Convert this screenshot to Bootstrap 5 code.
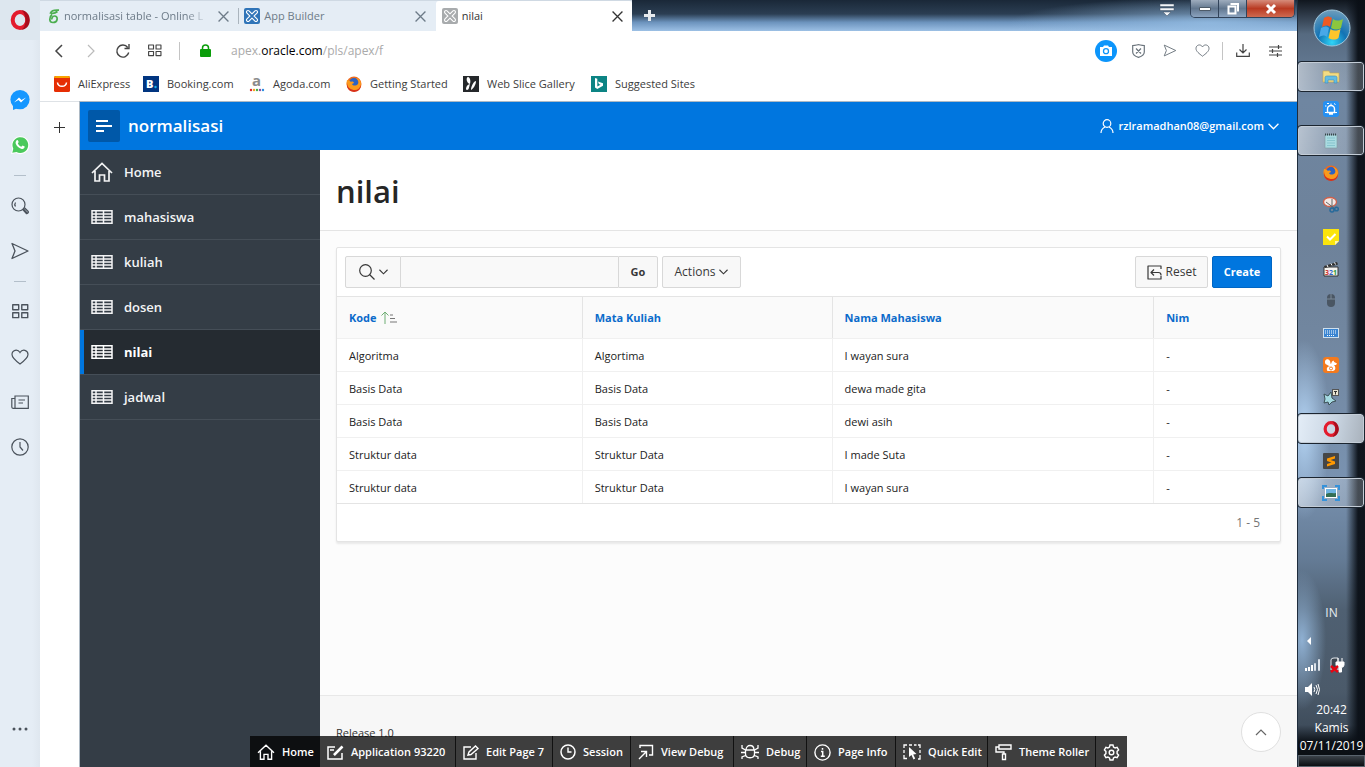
<!DOCTYPE html>
<html lang="id">
<head>
<meta charset="utf-8">
<meta name="viewport" content="width=device-width, initial-scale=1">
<title>nilai</title>
<link href="https://cdn.jsdelivr.net/npm/bootstrap@5.3.0/dist/css/bootstrap.min.css" rel="stylesheet">
<style>
:root{--ui:"Open Sans","Noto Sans",sans-serif;--blue:#0076df;--navy:#343d46}
body{font-family:var(--ui);font-size:12px;line-height:16px;color:#333;background:#fff;overflow:hidden}
button,input{font:inherit;color:inherit}
button{background:none;border:0;padding:0}
a{color:inherit;text-decoration:none}
svg{display:block;flex:none;overflow:visible}
.ico{fill:none;stroke:currentColor;stroke-width:1.2}
.shrinkable{min-width:0;min-height:0}
.rail{width:40px;background:linear-gradient(90deg,#e5edf5 80%,#dfe7ef);color:#4b535c}
.rail-logo{height:40px;width:40px;background:#dde7ef;display:grid;place-items:center;margin-bottom:37px}
.rail-btn{height:45px;width:40px;display:grid;place-items:center}
.rail-sep{width:12px;height:1px;background:#b3bfca;margin:8px 0 7px}
.tabstrip{height:31px;background:radial-gradient(ellipse 200px 26px at 93% 75%,rgba(150,190,228,.8),transparent),linear-gradient(#1a2838,#2b3e53 45%,#6c93bd 72%,#9cc0e5)}
.tabgroup{width:592px;background:#e5edf5;border-top:1px solid #cfd9e3}
.tab-item{flex:1 1 0;color:#6d7b88;padding:0 9px 0 8px;font-size:11px}
.tab-item + .tab-item{padding-left:6px}
.tab-split + .tab-item{padding-left:5px}
.tab-live{background:#fff;color:#333;border-radius:3px 3px 0 0;margin-left:1px}
.tab-split{width:1px;height:16px;background:#aab4bd}
.tab-fade{white-space:nowrap;-webkit-mask:linear-gradient(90deg,#000 88%,rgba(0,0,0,.25));mask:linear-gradient(90deg,#000 88%,rgba(0,0,0,.25))}
.win-ctl{border:1px solid #31435a;border-top:0;border-radius:0 0 5px 5px;overflow:hidden;height:18px;margin-right:2px}
.win-ctl button{width:28px;display:grid;place-items:center;background:linear-gradient(#9eacbd,#62778f 50%,#8ba3bf);border-right:1px solid #31435a}
.win-ctl .win-x{width:47px;border:0;background:linear-gradient(#d68c7b,#b93a22 50%,#cf6a50)}
.addr{height:39px;color:#444;padding:0 6px 0 3px}
.addr-btn{width:32px;height:32px;display:grid;place-items:center}
.addr-sep{width:1px;height:18px;background:#c4c4c4}
.addr-forward{color:#bbb}
.addr-text{font-size:12px;color:#aaa}
.marks{height:31px;display:grid;grid-template-columns:89px 106px 97px 117px 128px auto;padding:0 0 4px 14px;color:#3c3c3c;font-size:11px}
.page-add{width:39px;color:#444}
.page-add button{height:50px;display:grid;place-items:center}
.app{border:1px solid #adb9c4;border-width:1px 0 0 1px}
.app-head{height:48px;background:var(--blue);color:#fff;padding:0 18px 0 8px}
.app-menu{width:32px;height:32px;background:#0058a8;border-radius:2px;display:grid;place-items:center}
.app-title{font-size:17px;font-weight:600;line-height:24px}
.user{font-size:11px;font-weight:600}
.side{width:240px;background:var(--navy);color:#fff}
.side a{height:45px;border-bottom:1px solid #454e57;padding-left:11px;font-size:13px;font-weight:600;color:#f3f4f5;gap:11px}
.side a.active{background:#252b31;box-shadow:inset 4px 0 var(--blue);font-weight:700;color:#fff}
.content{background:#fcfcfc}
.page-title{height:81px;background:#fff;border-bottom:1px solid #e4e4e4;padding:2px 16px 0}
.page-title h1{font-size:31px;line-height:40px;font-weight:600;color:#262626}
.report{background:#fff;border:1px solid #e4e4e4;border-radius:2px;box-shadow:0 2px 2px rgba(0,0,0,.08)}
.ctl{height:32px;border:1px solid #d8d8d8;background:#f8f8f8;border-radius:2px;color:#383838}
.ctl-search{width:56px;border-radius:2px 0 0 2px}
.ctl-input{width:217px;border-width:1px 0;border-radius:0;background:#f9f9f9}
.ctl-go{width:40px;font-weight:700;border-radius:0 2px 2px 0;font-size:11px}
.ctl-actions{width:79px}
.ctl-reset{width:73px}
.ctl-create{width:60px;background:var(--blue);border-color:#0066c4;color:#fff;font-weight:700;font-size:11px}
.grid-table{table-layout:fixed;font-size:11px;border-top:1px solid #e4e4e4}
.grid-table th{height:42px;background:#fafafa;border-right:1px solid #e4e4e4;border-bottom:1px solid #f0f0f0;padding:0 12px;color:#0b6bcb;font-weight:700}
.grid-table td{height:33px;border-right:1px solid #f0f0f0;border-bottom:1px solid #f0f0f0;padding:1px 12px 0;color:#222}
.grid-table tr>:last-child{border-right:0}
.grid-table tr:last-child td{border-bottom-color:#e4e4e4}
.w-a{width:26%}.w-b{width:26.5%}.w-c{width:34.1%}
.pager{height:37px;color:#767676;padding-right:20px}
.app-foot{height:72px;background:#f7f7f7;border-top:1px solid #e8e8e8;padding:29px 16px 0;font-size:11px}
.to-top{width:40px;height:40px;right:16px;bottom:15px;border:1px solid #e0e0e0;border-radius:50%;background:#fff;color:#666;display:grid;place-items:center}
.devbar{left:210px;bottom:0;height:31px;display:grid;grid-template-columns:70px 136px 97px 78px 103px 73px 89px 92px 108px 31px;background:rgba(0,0,0,.75);color:#fff;font-size:11px;font-weight:600}
.devbar a{display:flex;align-items:center;gap:7px;padding:1px 0 0 7px;border-right:1px solid #111;white-space:nowrap}
.devbar a:first-child,.devbar a:last-child{border-right:0}
.taskbar{width:68px;border-left:1px solid #1e2c3c;color:#fff;background:
 linear-gradient(90deg,transparent 48px,rgba(10,15,22,.95) 60px),
 radial-gradient(ellipse 26px 90px at 6px 430px,#b3d3f3,transparent),
 radial-gradient(ellipse 24px 70px at 4px 640px,#8fb0d2,transparent),
 linear-gradient(#10161e,#566a80 34px,#6f86a1 100px,#6e829a 240px,#71869f 330px,#7992b0 480px,#647b95 560px,#4f6072 610px,#4b5a6a 690px,#3f4d5c 725px,#0c1117 742px,#0a0d11)}
.orb{height:61px;padding-top:9px}
.task{height:32px;display:grid;place-items:center;width:66px}
.task-open{height:29px;margin:1px 0 2px;border:1px solid #c3ccd6;border-radius:3px;outline:1px solid #1b2530;background:linear-gradient(100deg,rgba(255,255,255,.5),rgba(255,255,255,.25) 50%,rgba(190,200,210,.3))}
.task-lit{background:linear-gradient(100deg,#e3edf7,#c9d5e2 55%,#a9b2bc)}
.tray-lang{color:#e8edf2}
.clock{line-height:18px;font-size:12px}
.tray-row{height:24px;padding-left:7px;gap:9px}
.peek{height:12px;border:1px solid #59636d;background:linear-gradient(#3b4249,#0b0e12)}
</style>
</head>
<body class="d-flex vh-100">
<svg width="0" height="0" class="position-absolute" aria-hidden="true">
 <symbol id="i-table" viewBox="0 0 22 14"><path d="M1 .8h20v12.400H1zM1 4h20M1 7h20M1 10h20M5 1v12M12.500 1v12" fill="none" stroke="currentColor" stroke-width="1.500"/></symbol>
 <symbol id="i-home" viewBox="0 0 22 20"><path d="M1 11 11 1.500 21 11M4 9v10h4.500v-6h5v6H18V9" fill="none" stroke="currentColor" stroke-width="1.700"/></symbol>
 <symbol id="i-down" viewBox="0 0 10 6"><path d="m.5.5 4.500 4.500L9.500.5" fill="none" stroke="currentColor" stroke-width="1.200"/></symbol>
 <symbol id="i-x" viewBox="0 0 10 10"><path d="m.5.5 9 9m0-9-9 9" fill="none" stroke="currentColor" stroke-width="1.200"/></symbol>
 <symbol id="i-heart" viewBox="0 0 18 16"><path d="M9 15C5 12 1 9 1 5.500 1 1 6.500-.5 9 3.500 11.500-.5 17 1 17 5.500 17 9 13 12 9 15z" fill="none" stroke="currentColor" stroke-width="1.200"/></symbol>
 <symbol id="i-send" viewBox="0 0 18 18"><path d="M1 1.500 17 9 1 16.500 4 9z" fill="none" stroke="currentColor" stroke-width="1.300" stroke-linejoin="round"/></symbol>
 <symbol id="i-four" viewBox="0 0 16 14"><path d="M.7.7h5.600v4.600H.7zM9.200.7h5.600v4.600H9.200zM.7 8.200h5.600v4.600H.7zM9.200 8.200h5.600v4.600H9.200z" fill="none" stroke="currentColor" stroke-width="1.300" stroke-linejoin="round"/></symbol>
 <symbol id="i-apex" viewBox="0 0 16 16"><rect width="16" height="16" rx="2"/><path d="m4 4 8 8m0-8-8 8" stroke="#fff" stroke-width="4" stroke-linecap="round"/><path d="m4 4 8 8m0-8-8 8" stroke="currentColor" stroke-width="1.800" stroke-linecap="round"/></symbol>
 <symbol id="i-opera" viewBox="0 0 20 20"><ellipse cx="10" cy="10" rx="7.300" ry="8" fill="none" stroke="#e31b2d" stroke-width="4"/><path d="M11 .2C16 0 19.800 4.500 19.800 10S16 20 11 19.800C15 18 15.500 13 15.500 10S14.500 2 11 .2z" fill="#a90c1c"/></symbol>
 <symbol id="i-fox" viewBox="0 0 16 16"><circle cx="8" cy="8" r="7.500" fill="#ef6a1c"/><circle cx="8" cy="7" r="5" fill="#2c63c4"/><path d="M1 4c2 0 3 1 4 2 1-1 3 0 3 1l-2 1c1 2 4 2 6 0 1-2 0-4-2-6 5 1 6 6 4 9-3 5-10 5-12 1-1-2-2-5-1-8z" fill="#fb9a1c"/><path d="M1 6c0 6 4 8 8 8 3 0 5-2 6-5 0 9-13 9-14 1z" fill="#d8321a"/></symbol>
</svg>

<nav class="rail flex-shrink-0 d-flex flex-column align-items-center" aria-label="Opera">
 <button class="rail-logo" aria-label="Menu"><svg width="20" height="20"><use href="#i-opera"/></svg></button>
 <button class="rail-btn" aria-label="Messenger"><svg width="20" height="20" viewBox="0 0 20 20"><circle cx="10" cy="9.600" r="9.600" fill="#1597ff"/><path d="M3 14v6l5-2z" fill="#1597ff"/><path d="m4 12.500 5-5 2.500 2.500L16 7.500l-5 5L8.500 10z" fill="#fff"/></svg></button>
 <button class="rail-btn" aria-label="WhatsApp"><svg width="18" height="18" viewBox="0 0 18 18"><path d="M0 18l1.300-5A9 9 0 1 1 5 17z" fill="#fff"/><path d="m1.300 16.700 1-4A7.900 7.900 0 1 1 5.500 16z" fill="#4bc95c"/><path d="M5.500 4.500c1-1 1.600 0 2.200 1.500L6.800 7.500c.8 1.600 1.900 2.600 3.500 3.300l1.300-1.200 2.100 1c0 2-1.500 2.700-3 2.400C7.500 12 5.500 10 4.700 7.500c-.2-1 0-2.200.8-3z" fill="#fff"/></svg></button>
 <span class="rail-sep"></span>
 <button class="rail-btn" aria-label="Cari"><svg class="ico" width="18" height="18"><circle cx="7.500" cy="7.500" r="6.500"/><path d="M4.500 9.500a3.500 3.500 0 0 1 0-4M12 11.500l4.500 5m-3.300-6 4 4c.8 1-1 2.700-2 1.900l-3.600-4" stroke-width="1.300"/></svg></button>
 <button class="rail-btn" aria-label="My Flow"><svg width="18" height="18"><use href="#i-send"/></svg></button>
 <span class="rail-sep"></span>
 <button class="rail-btn" aria-label="Speed Dial"><svg width="17" height="15"><use href="#i-four"/></svg></button>
 <button class="rail-btn" aria-label="Bookmark"><svg width="18" height="16"><use href="#i-heart"/></svg></button>
 <button class="rail-btn" aria-label="Berita"><svg class="ico" width="18" height="14"><path d="M4 13.300V1h13.300v12.300H2A1.300 1.300 0 0 1 .8 12V3.500H4M7.500 5H14M7.500 8H12"/></svg></button>
 <button class="rail-btn" aria-label="Riwayat"><svg class="ico" width="18" height="18"><circle cx="9" cy="9" r="8.200"/><path d="M9 4v5l3 3.500"/></svg></button>
 <button class="rail-btn mt-auto mb-3" aria-label="Lainnya"><svg width="16" height="4" fill="currentColor"><circle cx="2" cy="2" r="1.500"/><circle cx="8" cy="2" r="1.500"/><circle cx="14" cy="2" r="1.500"/></svg></button>
</nav>

<div class="flex-fill d-flex flex-column position-relative shrinkable">
 <header class="tabstrip d-flex flex-shrink-0">
  <div class="tabgroup d-flex align-items-center">
   <div class="tab-item d-flex align-items-center"><svg width="12" height="15" viewBox="0 0 12 15" class="me-1"><path d="M11 1.200C6.500.8 3.500 1.500 2.500 4c3 .8 5 0 7-1.500M4 5.500C1 8 .8 13.500 5 13.500c5 0 5.500-6.500 1.500-6.500C4.500 7 3.500 9 4 10.500" fill="none" stroke="#4cae4f" stroke-width="1.700"/></svg><span class="tab-fade">normalisasi table - Online L</span><button class="ms-auto" aria-label="Tutup"><svg width="11" height="11"><use href="#i-x"/></svg></button></div>
   <span class="tab-split"></span>
   <div class="tab-item d-flex align-items-center"><svg width="16" height="16" class="me-1" color="#2f74b8" fill="#2f74b8"><use href="#i-apex"/></svg>App Builder<button class="ms-auto" aria-label="Tutup"><svg width="11" height="11"><use href="#i-x"/></svg></button></div>
   <div class="tab-item tab-live h-100 d-flex align-items-center"><svg width="16" height="16" class="me-1" color="#a8abad" fill="#a8abad"><use href="#i-apex"/></svg>nilai<button class="ms-auto" aria-label="Tutup"><svg width="11" height="11"><use href="#i-x"/></svg></button></div>
  </div>
  <button class="ms-2 px-1" aria-label="Tab baru"><svg width="11" height="11"><path d="M5.500 0v11M0 5.500h11" stroke="#e6eaee" stroke-width="3"/></svg></button>
  <button class="ms-auto me-3 align-self-start pt-1" aria-label="Menu tab"><svg width="14" height="12" fill="#f2f5f8" stroke="#3d4f63" stroke-width=".5"><path d="M0 0h14v2.500H0zM0 4h14v2.500H0zM3 8h8l-4 4z"/></svg></button>
  <div class="win-ctl d-flex">
   <button aria-label="Kecilkan"><svg width="12" height="4"><path d="M.5.5h11v3H.5z" fill="#fff" stroke="#4d5a68"/></svg></button>
   <button aria-label="Pulihkan"><svg width="12" height="12"><path d="M3.500 1h7.500v7.500M1.500 3.500h7v7h-7z" fill="none" stroke="#fff" stroke-width="2"/></svg></button>
   <button class="win-x" aria-label="Tutup jendela"><svg width="12" height="10"><path d="m2 1 8 8m0-8-8 8" stroke="#fff" stroke-width="3"/></svg></button>
  </div>
 </header>

 <div class="addr d-flex align-items-center flex-shrink-0">
  <button class="addr-btn" aria-label="Kembali"><svg class="ico" width="8" height="14"><path d="M7 1 1 7l6 6" stroke-width="1.500"/></svg></button>
  <button class="addr-btn addr-forward" aria-label="Maju"><svg class="ico" width="8" height="14"><path d="m1 1 6 6-6 6"/></svg></button>
  <button class="addr-btn" aria-label="Muat ulang"><svg class="ico" width="14" height="14"><path d="M12.700 8.500a6 6 0 1 1-1-5M13 0v4.500H8.500" stroke-width="1.400"/></svg></button>
  <button class="addr-btn" aria-label="Speed Dial"><svg width="14" height="13"><use href="#i-four"/></svg></button>
  <span class="addr-sep me-1 ms-2"></span>
  <svg width="11" height="13" class="ms-3 me-3"><path d="M2.500 6V4a3 3 0 0 1 6 0v2" fill="none" stroke="#0a9d0a" stroke-width="1.500"/><rect y="5" width="11" height="8" rx="1" fill="#0a9d0a"/></svg>
  <div class="addr-text flex-fill ms-1" role="textbox" contenteditable="true" aria-label="Alamat" spellcheck="false">apex.<span class="text-black">oracle.com</span>/pls/apex/f</div>
  <button class="addr-btn" aria-label="Snapshot"><svg width="22" height="22"><circle cx="11" cy="11" r="11" fill="#0c95fb"/><path d="M5 7h3l1-1.500h4L14 7h3v9H5z" fill="#fff"/><circle cx="11" cy="11.200" r="2.500" fill="none" stroke="#0c95fb" stroke-width="1.300"/></svg></button>
  <button class="addr-btn text-secondary" aria-label="Pemblokir iklan"><svg class="ico" width="13" height="14"><path d="M.7 1.500C4 1.500 5 .7 6.500.7s2.500.8 5.800.8V8c0 3-3 4.500-5.800 5.400C3.700 12.500.7 11 .7 8zM4 4.500 9 9.500m0-5-5 5"/></svg></button>
  <button class="addr-btn text-secondary" aria-label="My Flow"><svg width="14" height="13"><use href="#i-send"/></svg></button>
  <button class="addr-btn text-secondary" aria-label="Bookmark"><svg width="15" height="13"><use href="#i-heart"/></svg></button>
  <span class="addr-sep mx-1"></span>
  <button class="addr-btn" aria-label="Unduhan"><svg class="ico" width="14" height="13"><path d="M.7 8.500v3.800h12.600V8.500M7 0v9M3.500 5.500 7 9l3.500-3.500"/></svg></button>
  <button class="addr-btn" aria-label="Penyiapan mudah"><svg class="ico" width="13" height="12"><path d="M0 2h13M0 6h13M0 10h13M9.500 0v4M3.500 4v4M8.500 8v4"/></svg></button>
 </div>

 <nav class="marks flex-shrink-0" aria-label="Bilah bookmark">
  <a href="#" class="d-flex align-items-center gap-2"><svg width="16" height="16"><rect width="16" height="16" rx="1.500" fill="#e62e04"/><path d="M0 2a2 2 0 0 1 2-2h12a2 2 0 0 1 2 2z" fill="#f8a400"/><path d="M3.500 6.500c.5 5 8.500 5 9 0" fill="none" stroke="#fff" stroke-width="1.500"/></svg>AliExpress</a>
  <a href="#" class="d-flex align-items-center gap-2"><svg width="16" height="16"><rect width="16" height="16" fill="#013580"/><text x="3" y="12" font-size="11" font-weight="800" fill="#fff">B</text><circle cx="12.500" cy="11" r="1.200" fill="#17b0ea"/></svg>Booking.com</a>
  <a href="#" class="d-flex align-items-center gap-2"><svg width="16" height="16"><text x="3" y="10" font-size="15" font-weight="700" fill="#8c8c8c">a</text><circle cx="2" cy="14" r="1.200" fill="#e0262c"/><circle cx="5" cy="14" r="1.200" fill="#f5a31c"/><circle cx="8" cy="14" r="1.200" fill="#44ad46"/><circle cx="11" cy="14" r="1.200" fill="#8a4ca4"/><circle cx="14" cy="14" r="1.200" fill="#2b8fe0"/></svg>Agoda.com</a>
  <a href="#" class="d-flex align-items-center gap-2"><svg width="16" height="16"><use href="#i-fox"/></svg>Getting Started</a>
  <a href="#" class="d-flex align-items-center gap-2"><svg width="16" height="16"><rect width="16" height="16" fill="#25282b"/><path d="M7 8C3 7 3 1 5 1s3 4 2 7c-1 3-1 6-3 6s-1-5 3-6zm1 6c2-1 5-5 5-9-2 0-5 5-5 9z" fill="#fff"/></svg>Web Slice Gallery</a>
  <a href="#" class="d-flex align-items-center gap-2"><svg width="16" height="16"><rect width="16" height="16" fill="#0c8484"/><path d="m4 2 2.300.8v7.700l3.200-1.800-1.600-.8-1-2.400 5.100 1.800v2.500l-5.700 3.300L4 11.600z" fill="#fff"/></svg>Suggested Sites</a>
 </nav>

 <div class="d-flex flex-fill shrinkable">
  <div class="page-add flex-shrink-0 border-top"><button class="w-100" aria-label="Tambah"><svg width="11" height="11"><path d="M5.500 0v11M0 5.500h11" stroke="#333" stroke-width="1"/></svg></button></div>
  <div class="app flex-fill d-flex flex-column">
   <header class="app-head d-flex align-items-center flex-shrink-0">
    <button class="app-menu me-2" aria-label="Navigasi"><svg width="16" height="12"><path d="M0 1h12M0 6h16M0 11h8" stroke="#fff" stroke-width="2"/></svg></button>
    <a href="#" class="app-title">normalisasi</a>
    <button class="user ms-auto d-flex align-items-center gap-1"><svg class="ico" width="14" height="14"><circle cx="7" cy="4.500" r="3.800"/><path d="M1 14c0-3.500 2-5 4-6m8 6c0-3.500-2-5-4-6"/></svg>rzlramadhan08@gmail.com<svg width="11" height="7"><use href="#i-down"/></svg></button>
   </header>
   <div class="d-flex flex-fill">
    <nav class="side flex-shrink-0" aria-label="Menu aplikasi">
     <a href="#" class="d-flex align-items-center"><svg width="22" height="20"><use href="#i-home"/></svg>Home</a>
     <a href="#" class="d-flex align-items-center"><svg width="22" height="14"><use href="#i-table"/></svg>mahasiswa</a>
     <a href="#" class="d-flex align-items-center"><svg width="22" height="14"><use href="#i-table"/></svg>kuliah</a>
     <a href="#" class="d-flex align-items-center"><svg width="22" height="14"><use href="#i-table"/></svg>dosen</a>
     <a href="#" class="d-flex align-items-center active" aria-current="page"><svg width="22" height="14"><use href="#i-table"/></svg>nilai</a>
     <a href="#" class="d-flex align-items-center"><svg width="22" height="14"><use href="#i-table"/></svg>jadwal</a>
    </nav>
    <div class="content flex-fill d-flex flex-column position-relative">
     <div class="page-title d-flex align-items-center"><h1 class="m-0">nilai</h1></div>
     <main class="p-3 flex-fill">
      <section class="report">
       <div class="d-flex p-2">
        <button class="ctl ctl-search d-flex align-items-center justify-content-center gap-1" aria-label="Pilih kolom"><svg class="ico" width="16" height="16"><circle cx="6.500" cy="6.500" r="5.800"/><path d="m10.500 10.500 5 5"/></svg><svg width="9" height="6"><use href="#i-down"/></svg></button>
        <input class="ctl ctl-input" type="text" aria-label="Cari">
        <button class="ctl ctl-go">Go</button>
        <button class="ctl ctl-actions ms-1 d-flex align-items-center justify-content-center gap-1">Actions<svg width="9" height="6"><use href="#i-down"/></svg></button>
        <button class="ctl ctl-reset ms-auto d-flex align-items-center justify-content-center gap-1"><svg class="ico" width="15" height="15"><path d="M14 4V1H1v13h13v-3.500M4 7.500h7.500A2.500 2.500 0 0 1 14 10M7 4.500l-3 3 3 3" stroke-linejoin="round"/></svg>Reset</button>
        <button class="ctl ctl-create ms-1">Create</button>
       </div>
       <table class="grid-table w-100">
        <thead><tr><th class="w-a"><a href="#" class="d-inline-flex align-items-center gap-1">Kode<svg width="16" height="14" fill="none"><path d="M4 13V1M.5 4.500 4 1l3.500 3.500" stroke="#6fae74"/><path d="M9 4h3M9 7.500h5M9 11h7" stroke="#777"/></svg></a></th><th class="w-b"><a href="#">Mata Kuliah</a></th><th class="w-c"><a href="#">Nama Mahasiswa</a></th><th><a href="#">Nim</a></th></tr></thead>
        <tbody>
         <tr><td>Algoritma</td><td>Algortima</td><td>I wayan sura</td><td>-</td></tr>
         <tr><td>Basis Data</td><td>Basis Data</td><td>dewa made gita</td><td>-</td></tr>
         <tr><td>Basis Data</td><td>Basis Data</td><td>dewi asih</td><td>-</td></tr>
         <tr><td>Struktur data</td><td>Struktur Data</td><td>I made Suta</td><td>-</td></tr>
         <tr><td>Struktur data</td><td>Struktur Data</td><td>I wayan sura</td><td>-</td></tr>
        </tbody>
       </table>
       <div class="pager d-flex align-items-center justify-content-end">1 - 5</div>
      </section>
     </main>
     <footer class="app-foot">Release 1.0</footer>
     <button class="to-top position-absolute" aria-label="Ke atas"><svg class="ico" width="12" height="7"><path d="m1 6 5-5 5 5"/></svg></button>
    </div>
   </div>
  </div>
 </div>

 <nav class="devbar position-absolute" aria-label="Toolbar pengembang">
  <a href="#"><svg width="18" height="16"><use href="#i-home"/></svg>Home</a>
  <a href="#"><svg class="ico" width="17" height="15"><path d="M8 2H1v12h14V8M3 5h4M7 10l8-8.500" stroke-width="1.500"/><path d="m7 10 8.500-8.500" stroke-width="2.500"/></svg>Application 93220</a>
  <a href="#"><svg class="ico" width="16" height="15"><path d="M8 2H1v12h12V8M5 10l1-3 6.500-6L15 3.500 8 9.500z" stroke-width="1.400"/></svg>Edit Page 7</a>
  <a href="#"><svg class="ico" width="16" height="16"><circle cx="8" cy="8" r="7" stroke-width="1.500"/><path d="M8 3.500V8h3.500" stroke-width="1.400"/></svg>Session</a>
  <a href="#"><svg class="ico" width="16" height="16"><path d="M2 4V1.500h12.500V11H11M1 15l7-7M3 7.500h5.500V13" stroke-width="1.400"/></svg>View Debug</a>
  <a href="#"><svg class="ico" width="18" height="16"><path d="M5 6c0-6 8-6 8 0M4.500 6h9v4c0 5-9 5-9 0zM0 8.500h4M14 8.500h4M1 1v3l3.500 2M17 1v3l-3.500 2M1 15v-2l3.500-1.500M17 15v-2l-3.500-1.500" stroke-width="1.300"/></svg>Debug</a>
  <a href="#"><svg class="ico" width="17" height="17"><circle cx="8.500" cy="8.500" r="7.600" stroke-width="1.400"/><path d="M7 7.500h1.700v4.500M6.800 12.200h4M8.500 4v1.700" stroke-width="1.500"/></svg>Page Info</a>
  <a href="#"><svg class="ico" width="18" height="16"><path d="M1 4V1h3M6 1h3M11 1h2.500M15 1h2v3M17 6v3M17 11v4h-2M1 6v3M1 11v3.500h3" stroke-width="1.300"/><path d="M6 3v10l2.500-2 2 4.500 1.700-1-2-4 3.300-.5z" fill="#fff" stroke="none"/></svg>Quick Edit</a>
  <a href="#"><svg class="ico" width="17" height="16"><path d="M4 1h12v4H4zM4 3H1v5h8v2M7.500 10h3v5.500h-3z" stroke-width="1.400"/></svg>Theme Roller</a>
  <a href="#" aria-label="Pengaturan"><svg class="ico" width="17" height="17" viewBox="0 0 17 17"><path d="M7 1h3l.5 2 1.600.9 2-.6 1.500 2.600L14.100 7.400v2.200l1.500 1.500-1.500 2.600-2-.6-1.600.9L10 16H7l-.5-2-1.600-.9-2 .6-1.500-2.600 1.500-1.500V7.400L1.400 5.900l1.500-2.600 2 .6L6.500 3z" stroke-width="1.400"/><circle cx="8.500" cy="8.500" r="2.300" stroke-width="1.400"/></svg></a>
 </nav>
</div>

<aside class="taskbar flex-shrink-0 d-flex flex-column" aria-label="Taskbar">
 <button class="orb d-flex justify-content-center flex-shrink-0" aria-label="Start"><svg width="38" height="38"><defs><radialGradient id="g" cx=".5" cy=".9" r=".9"><stop offset="0" stop-color="#2fd5f7"/><stop offset=".45" stop-color="#1273b5"/><stop offset="1" stop-color="#6f9dbb"/></radialGradient></defs><circle cx="19" cy="19" r="18" fill="url(#g)" stroke="#9fc6dc"/><path d="M11 9c3-2 5-2 8 0l-2 9c-2-2-5-2-8 0z" fill="#ee5a24"/><path d="M20 10c3 2 6 2 10 0l-2 9c-3 2-6 2-10 0z" fill="#8cc63e"/><path d="M8 19c3-2 6-2 8 0l-2 9c-2-2-5-2-8 0z" fill="#48a8e8"/><path d="M17.500 20c3 2 6 2 10 0l-2 9c-3 2-6 2-10 0z" fill="#fcc52c"/></svg></button>
 <button class="task task-open" aria-label="Explorer"><svg width="16" height="14"><path d="M0 1h6l1 2h9v9H0z" fill="#f3dc84" stroke="#c9a94a" stroke-width=".6"/><path d="M2 13V7.500Q2 6 4 6h8q2 0 2 1.500V13h-3v-3H5v3z" fill="#63bde4" stroke="#3d8fb8" stroke-width=".6"/></svg></button>
 <button class="task" aria-label="SHAREit"><svg width="16" height="16"><rect width="16" height="16" rx="3" fill="#2590f2"/><path d="M4.500 11.500V8a3.500 3.500 0 0 1 7 0v3.500zM6 13h4" fill="none" stroke="#fff" stroke-width="1.400"/><path d="M2 5h1.500M4 2.500h2M11 2.500l1.500 1M2 11.500h2M12 11.500h2M8 2.500v2" stroke="#fff"/></svg></button>
 <button class="task task-open" aria-label="Notepad"><svg width="14" height="16"><path d="M1 2h12v13H1z" fill="#a9dbe1" stroke="#809c9f" stroke-width=".6"/><path d="M1 1.500h12" stroke="#35474a" stroke-width="2" stroke-dasharray="1 1"/><path d="M3 5h8M3 7.500h8M3 10h8M3 12.500h8" stroke="#79bcc5" stroke-width=".7"/></svg></button>
 <button class="task" aria-label="Firefox"><svg width="16" height="16"><use href="#i-fox"/></svg></button>
 <button class="task" aria-label="Snipping Tool"><svg width="16" height="16"><ellipse cx="7" cy="5" rx="6.500" ry="4.500" fill="#f2e9e6" stroke="#d0604a" stroke-width="1.300"/><path d="m3 5 8 6M9 2 9 10" stroke="#666"/><circle cx="9" cy="13" r="2" fill="none" stroke="#276a9a" stroke-width="1.500"/><circle cx="13.500" cy="12" r="1.800" fill="none" stroke="#276a9a" stroke-width="1.500"/></svg></button>
 <button class="task" aria-label="Sticky Notes"><svg width="16" height="16"><path d="M0 0h16v12l-4 4H0z" fill="#fbe40c"/><path d="M12 16v-4h4z" fill="#fff6b0"/><path d="m4 7.500 3 3 5.500-5.500" fill="none" stroke="#fff" stroke-width="2"/></svg></button>
 <button class="task" aria-label="Media Player Classic"><svg width="16" height="16"><path d="M1 6h14v9H1z" fill="#f4f2ee" stroke="#333"/><path d="m1 5 13-4 1 2.500L2 7z" fill="#333"/><path d="m4 4 1 2M8 2.500l1 2M11.500 1.500l1 2" stroke="#fff"/><text x="2" y="14" font-size="7" font-weight="700" fill="#c33">3<tspan fill="#36c">2</tspan><tspan fill="#393">1</tspan></text></svg></button>
 <button class="task" aria-label="Mouse"><svg width="10" height="14"><rect x="1" width="8" height="13" rx="4" fill="#4a5663"/><path d="M5 0v5M1 5h8" stroke="#7b8998"/></svg></button>
 <button class="task" aria-label="Keyboard"><svg width="16" height="10"><rect x=".5" y=".5" width="15" height="9" fill="#3a85d2" stroke="#cfe0ee"/><path d="M2 3h12M2 5h12M4 7.500h8" stroke="#fff" stroke-dasharray="1 1"/></svg></button>
 <button class="task" aria-label="UC Browser"><svg width="16" height="16"><rect width="16" height="16" rx="3" fill="#f47a1d"/><path d="M2.500 7C1 4 3 1.500 5.500 2.500S7 7 8 7l1-2.500 1.500-1 .7 1.500 2.800 1.500-1 1.500h-2c2 2 2 6-1.500 6H4.500C3 12 4 9 7 9.500" fill="#fff"/><circle cx="8" cy="11.500" r="1.500" fill="none" stroke="#f47a1d"/></svg></button>
 <button class="task" aria-label="Translator"><svg width="16" height="16"><path d="m1 5 4 2 3-4 1 6 4 3-4 1-3 3-1-3-4 1 1-4z" fill="#a5dbe2" stroke="#3d4f55"/><rect x="9.500" y=".5" width="6" height="6" fill="#e9e4d2" stroke="#555"/><path d="M11 2.500h3M12.500 2.500v3" stroke="#333"/></svg></button>
 <button class="task task-open task-lit" aria-label="Opera"><svg width="16" height="16"><use href="#i-opera"/></svg></button>
 <button class="task" aria-label="Sublime Text"><svg width="16" height="16"><rect width="16" height="16" rx="1" fill="#464646"/><path d="M12 3v2.500L7.500 7 12 8.500V11l-8 2.500V11l4.500-1.500L4 8V5.500z" fill="#ff9800"/></svg></button>
 <button class="task task-open" aria-label="Foto"><svg width="16" height="14"><path d="M0 3V0h4M12 0h4v4M16 10v4h-4M4 14H0v-4" fill="none" stroke="#3592da" stroke-width="2"/><rect x="2" y="2" width="12" height="10" fill="#fff"/><path d="M3 3h10v8H3z" fill="#6fb4e2"/><path d="M3 8c4-2 6 0 10-1v4H3z" fill="#356f55"/></svg></button>
 <div class="mt-auto d-flex flex-column">
  <button class="tray-lang mb-1 text-center">IN</button>
  <button class="tray-row d-flex align-items-center ps-2 mt-1" aria-label="Ikon tersembunyi"><svg width="6" height="8"><path d="M5 0v8L1 4z" fill="#fff"/></svg></button>
  <div class="tray-row d-flex align-items-center">
   <svg width="16" height="12" fill="#fff"><path d="M0 9h2v3H0zM3 8h2v4H3zM6 6h2v6H6z"/><path d="M9.500 4.500h1v7h-1zM13.500.5h1v11h-1z" fill="none" stroke="#dde3ea"/></svg>
   <svg width="15" height="16"><path d="M1 3q0-2 3-2h4v12H1z" fill="#3c4650" stroke="#dfe5ea"/><path d="M6 5h8v3q0 2-2.500 2.500V15H9v-4.500Q6 10 6 8zM8 1v4M12 1v4" fill="#fff" stroke="#fff" stroke-width="1"/><path d="m1 9 7 6m0-6-7 6" stroke="#e30613" stroke-width="2.500"/></svg>
  </div>
  <div class="tray-row d-flex align-items-center"><svg width="15" height="13"><path d="M0 4h3l4-4v13L3 9H0z" fill="#fff"/><path d="M9 4q1.500 2.500 0 5M11 2q3 4.500 0 9M13 1q3 5.500 0 11" fill="none" stroke="#fff"/></svg></div>
  <button class="clock">20:42<br>Kamis<br>07/11/2019</button>
  <button class="peek" aria-label="Tampilkan desktop"></button>
 </div>
</aside>
<script src="https://cdn.jsdelivr.net/npm/bootstrap@5.3.0/dist/js/bootstrap.bundle.min.js"></script>
</body>
</html>
